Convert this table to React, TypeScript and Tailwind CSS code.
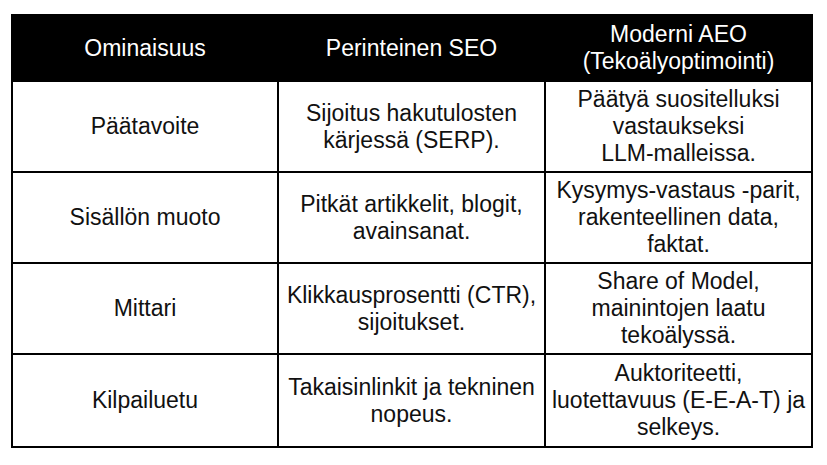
const rows = [
  {
    feature: "Päätavoite",
    seo: "Sijoitus hakutulosten kärjessä (SERP).",
    aeo: (
      <>
        Päätyä suositelluksi vastaukseksi{" "}
        <span className="whitespace-nowrap">LLM-malleissa.</span>
      </>
    ),
  },
  {
    feature: "Sisällön muoto",
    seo: "Pitkät artikkelit, blogit, avainsanat.",
    aeo: "Kysymys-vastaus -parit, rakenteellinen data, faktat.",
  },
  {
    feature: "Mittari",
    seo: "Klikkausprosentti (CTR), sijoitukset.",
    aeo: "Share of Model, mainintojen laatu tekoälyssä.",
  },
  {
    feature: "Kilpailuetu",
    seo: "Takaisinlinkit ja tekninen nopeus.",
    aeo: "Auktoriteetti, luotettavuus (E-E-A-T) ja selkeys.",
  },
];

export default function App() {
  return (
    <div className="min-h-[465px] w-[827px] bg-white pl-[11px] pt-[14px] font-['Liberation_Sans',Arial,sans-serif] text-[23px] leading-[27px] text-[#111]">
      <table className="w-[800px] table-fixed border-collapse">
        <colgroup>
          <col className="w-[266px]" />
          <col className="w-[267px]" />
          <col className="w-[267px]" />
        </colgroup>
        <thead>
          <tr className="h-[66px] bg-black text-white">
            <th className="border-2 border-black px-[4px] text-center font-normal">
              Ominaisuus
            </th>
            <th className="border-2 border-black px-[4px] text-center font-normal">
              Perinteinen SEO
            </th>
            <th className="border-2 border-black px-[4px] text-center font-normal">
              Moderni AEO (Tekoälyoptimointi)
            </th>
          </tr>
        </thead>
        <tbody>
          {rows.map((r, i) => (
            <tr key={r.feature} className={i === rows.length - 1 ? "h-[93px]" : "h-[91px]"}>
              <td className="border-2 border-black px-[4px] text-center align-middle">
                {r.feature}
              </td>
              <td className="border-2 border-black px-[4px] text-center align-middle">
                {r.seo}
              </td>
              <td className="border-2 border-black px-[4px] text-center align-middle">
                {r.aeo}
              </td>
            </tr>
          ))}
        </tbody>
      </table>
    </div>
  );
}
